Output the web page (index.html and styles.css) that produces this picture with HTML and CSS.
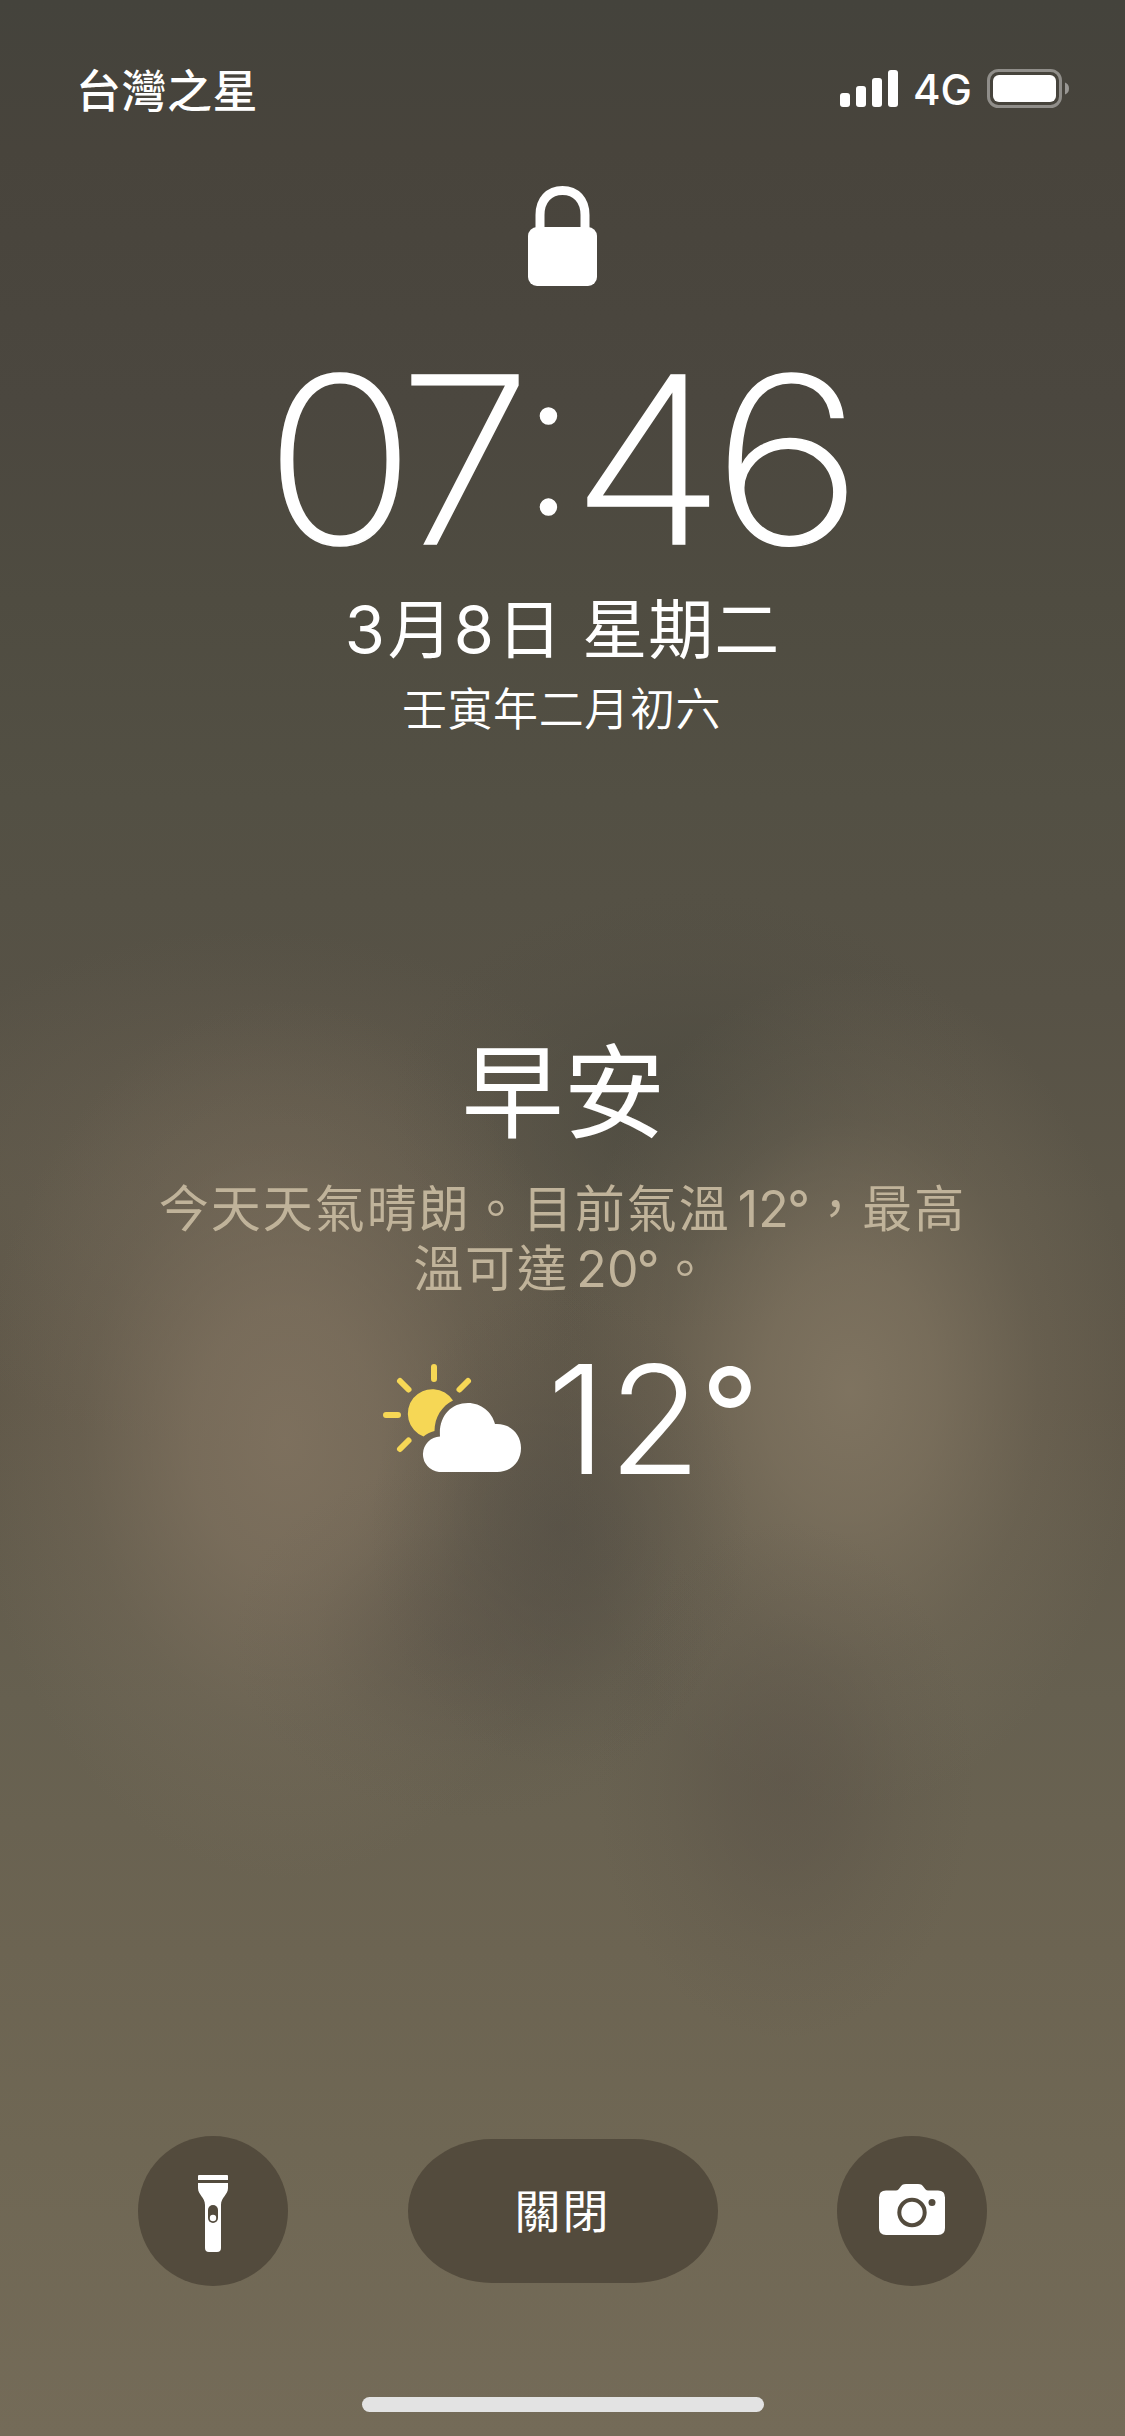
FILE: index.html
```html
<!DOCTYPE html>
<html lang="zh-Hant">
<head>
<meta charset="utf-8">
<title>鎖定畫面</title>
<link rel="stylesheet" href="styles.css">
</head>
<body>
<main class="screen">
  <header class="status">
    <span class="carrier">台灣之星</span>
    <div class="indicators">
      <svg class="signal" width="58" height="38" viewBox="0 0 58 38" fill="#fff"><rect y="23" width="10" height="14" rx="3"/><rect x="16" y="16" width="10" height="21" rx="3"/><rect x="32" y="8" width="10" height="29" rx="3"/><rect x="48" width="10" height="37" rx="3"/></svg>
      <span class="network">4G</span>
      <svg class="battery" width="82" height="39" viewBox="0 0 82 39"><rect x="1.5" y="1.5" width="72" height="36" rx="10" fill="none" stroke="#fff" stroke-opacity=".4" stroke-width="3"/><rect x="6" y="6" width="63" height="27" rx="6" fill="#fff"/><path d="M78 13.500q4 1.500 4 6t-4 6z" fill="#fff" fill-opacity=".45"/></svg>
    </div>
  </header>
  <svg class="lock" width="69" height="100" viewBox="0 0 69 100"><rect y="41" width="69" height="59" rx="9" fill="#fff"/><path d="M12 44V29C12 14 21 4.500 34.500 4.500S57 14 57 29V44" fill="none" stroke="#fff" stroke-width="9"/></svg>
  <h1 class="clock"><span class="d0">0</span><span class="d7">7</span><span class="colon">:</span><span class="d4">4</span><span class="d6">6</span></h1>
  <p class="date">3<span class="month">月</span>8<span class="day">日</span> 星期二</p>
  <p class="lunar">壬寅年二月初六</p>
  <section class="greeting">
    <h2 class="hello">早安</h2>
    <p class="forecast">今天天氣晴朗。目前氣溫<span class="num">12<span class="deg">°</span></span>，最高<br>溫可達<span class="num">20<span class="deg">°</span></span>。</p>
    <div class="weather">
      <svg class="weather-icon" width="138" height="108" viewBox="0 0 138 108">
        <path d="M51 3v12M17 17l8.500 8.500M85 17l-8.500 8.500M3 51h12M17 85l8.500-8.500" stroke="#f6d755" stroke-width="6" stroke-linecap="round"/>
        <path d="M40.500 72.500A24.500 24.500 0 1 1 70 36.500C59 42 51.500 53 51.500 67C47 68 43.500 70 40.500 72.500z" fill="#f6d755"/>
        <path d="M56 108A17.800 17.800 0 0 1 57 72.500C55.500 52 68 39 85 39C98 39 109 48 112 60C127 59 138 70 138 84C138 98 128 108 114 108z" fill="#fff"/>
      </svg>
      <span class="temp">12<span class="deg">°</span></span>
    </div>
  </section>
  <footer class="actions">
    <button class="round" aria-label="手電筒"><svg class="torch" width="30" height="77" viewBox="0 0 30 77"><path d="M0 5V1q0-1 1-1h28q1 0 1 1v4zM0 8h30v5c0 7-7 9-7 17v43q0 4-4 4h-8q-4 0-4-4V30C7 22 0 20 0 13z" fill="#fff"/><rect x="10" y="30" width="10" height="18" rx="5" fill="#534b3d"/><circle cx="15" cy="43" r="3.200" fill="#fff"/></svg></button>
    <button class="close">關閉</button>
    <button class="round" aria-label="相機"><svg class="camera" width="66" height="51" viewBox="0 0 66 51"><path d="M7 6.500H17c2 0 3-1.500 4-3C22.500 1 24 0 27 0H39c3 0 4.500 1 6 3.500c1 1.500 2 3 4 3H59q7 0 7 7V44q0 7-7 7H7q-7 0-7-7V13.500q0-7 7-7z" fill="#fff"/><circle cx="33" cy="28.500" r="12.700" fill="none" stroke="#534b3d" stroke-width="4"/><circle cx="53" cy="18.500" r="3.500" fill="#534b3d"/></svg></button>
  </footer>
  <div class="home-bar"></div>
</main>
</body>
</html>
```
FILE: styles.css
```css
* { box-sizing: border-box; margin: 0; padding: 0; }
body { width: 1125px; color: #fff; font-family: Inter, "Noto Sans CJK TC", sans-serif; }
.screen {
  width: 1125px; height: 2436px; overflow: hidden;
  display: flex; flex-direction: column; align-items: center;
  background:
    radial-gradient(ellipse 190px 260px at 785px 1780px, rgba(88,80,70,.5), rgba(88,80,70,.38) 30%, rgba(88,80,70,.14) 65%, transparent),
    radial-gradient(ellipse 190px 240px at 560px 1530px, rgba(82,77,68,.6), rgba(82,77,68,.43) 30%, rgba(82,77,68,.15) 65%, transparent),
    radial-gradient(ellipse 240px 180px at 470px 1640px, rgba(88,80,70,.4), rgba(88,80,70,.25) 35%, rgba(88,80,70,.08) 65%, transparent),
    radial-gradient(ellipse 290px 420px at 850px 1390px, rgba(132,120,100,.85), rgba(130,118,98,.68) 30%, rgba(130,118,98,.23) 65%, transparent),
    radial-gradient(ellipse 310px 440px at 285px 1440px, rgba(130,116,97,.85), rgba(130,116,97,.68) 30%, rgba(130,116,97,.23) 65%, transparent),
    radial-gradient(ellipse 300px 220px at 690px 1110px, rgba(76,74,64,.75), rgba(76,74,64,.5) 35%, rgba(76,74,64,.15) 70%, transparent),
    radial-gradient(ellipse 400px 260px at 250px 1190px, rgba(112,101,85,.5), rgba(112,101,85,.3) 40%, transparent),
    linear-gradient(#44433c 0, #48443c 150px, #4b473f 400px, #4f4c41 600px, #535044 800px, #575246 1000px, #5d5749 1200px, #605849 1400px, #666050 1700px, #6c6452 1950px, #6f6754 2150px, #746b58 2436px);
}
.status { width: 100%; height: 130px; padding: 0 56px 0 76px; display: flex; justify-content: space-between; }
.carrier { font-size: 45px; font-weight: 500; line-height: 60px; padding-top: 62px; letter-spacing: .5px; }
.indicators { display: flex; padding-top: 70px; }
.network { font-size: 42px; font-weight: 450; line-height: 40px; width: 74px; margin-left: 15px; }
.battery { margin-top: -1px; }
.lock { margin-top: 56px; }
.clock { display: flex; margin-top: 48px; margin-left: 1px; height: 252px; font-weight: 200; font-size: 232px; line-height: 252px; -webkit-text-stroke: 1.5px #fff; }
.clock span { display: flex; justify-content: center; }
.d0 { width: 124px; transform: scaleX(1.08); }
.d7 { width: 126px; transform: scaleX(1.04); }
.clock .colon { width: 42px; font-size: 204px; transform: translateY(-20px); }
.d4 { width: 156px; transform: scaleX(1.09); }
.d6 { width: 123px; transform: scaleX(1.12); }
.date { font-size: 65px; line-height: 90px; height: 90px; letter-spacing: 1px; margin-top: -1px; }
.month, .day { margin-left: 2px; }
.lunar { font-size: 45px; font-weight: 350; line-height: 60px; margin-top: 5px; letter-spacing: .6px; padding-right: 2px; }
.greeting { display: flex; flex-direction: column; align-items: center; margin-top: 288px; }
.hello { font-size: 102px; line-height: 130px; font-weight: 400; padding-left: 2px; }
.forecast { color: #c0b39a; font-size: 50px; line-height: 60px; letter-spacing: 2px; text-align: center; margin-top: 21px; white-space: nowrap; }
.num { margin-left: 7px; letter-spacing: .3px; }
.forecast .deg { margin-left: -2px; }
.weather { display: flex; width: 359px; margin-top: 65px; }
.temp { width: 192px; font-size: 151px; line-height: 110px; font-weight: 300; margin-left: 26px; white-space: nowrap; letter-spacing: 2px; }
.temp .deg { display: inline-block; font-size: 127px; font-weight: 400; line-height: 1; height: 0; margin-left: -2px; transform: translateY(-15px); }
.actions { width: 100%; padding: 0 138px; display: flex; justify-content: space-between; align-items: center; margin-top: auto; }
button { border: 0; background: #534b3d; color: #fff; font: inherit; display: flex; align-items: center; justify-content: center; }
.round { width: 150px; height: 150px; border-radius: 50%; }
.torch { margin-top: 4px; }
.camera { margin-bottom: 3px; }
.close { width: 310px; height: 144px; border-radius: 84px / 72px; font-size: 46px; letter-spacing: 2px; padding-bottom: 7px; }
.home-bar { width: 402px; height: 15px; border-radius: 8px; background: #e3e3e3; margin: 111px 0 24px; }
```
